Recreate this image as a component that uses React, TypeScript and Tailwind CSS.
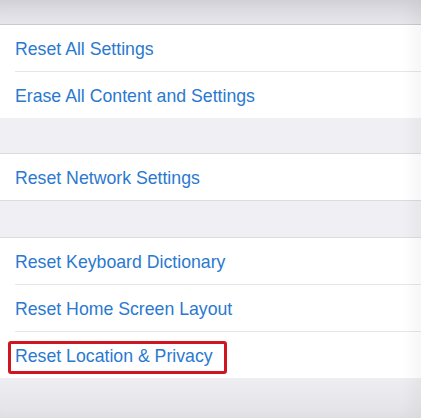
import React from "react";

const Row = ({ label, sep, children }: { label: string; sep?: boolean; children?: React.ReactNode }) => (
  <div className="relative">
    <div className="h-[46px] flex items-center pl-[15px] pt-[4px] text-[17.7px] text-[#2a79d0] leading-none">
      {label}
    </div>
    {children}
    {sep && <div className="ml-[15px] h-px bg-[#e6e6ea]" />}
  </div>
);

export default function App() {
  return (
    <div
      className="relative w-[421px] h-[418px] overflow-hidden bg-[#efeff4] flex flex-col"
      style={{ fontFamily: '"Liberation Sans", Arial, sans-serif' }}
    >
      <div className="h-[25px] shrink-0 bg-gradient-to-b from-[#d4d4da] to-[#e6e6eb] border-b border-[#c9c9ce]" />
      <div className="bg-white shrink-0">
        <Row label="Reset All Settings" sep />
        <Row label="Erase All Content and Settings" />
      </div>
      <div className="h-[36px] shrink-0 border-b border-[#dcdce0]" />
      <div className="bg-white shrink-0 border-b border-[#dcdce0]">
        <Row label="Reset Network Settings" />
      </div>
      <div className="h-[37px] shrink-0 border-b border-[#dcdce0]" />
      <div className="bg-white shrink-0">
        <Row label="Reset Keyboard Dictionary" sep />
        <Row label="Reset Home Screen Layout" sep />
        <Row label="Reset Location & Privacy">
          <div className="absolute left-[8px] top-[9px] w-[219px] h-[33px] border-[3px] border-[#cf1620] rounded-[3px]" />
        </Row>
      </div>
      <div className="flex-1 bg-gradient-to-b from-[#ededf2] to-[#e2e2e7]" />
      <div className="pointer-events-none absolute inset-0 shadow-[inset_-10px_0_14px_rgba(0,0,0,0.035)]" />
    </div>
  );
}
